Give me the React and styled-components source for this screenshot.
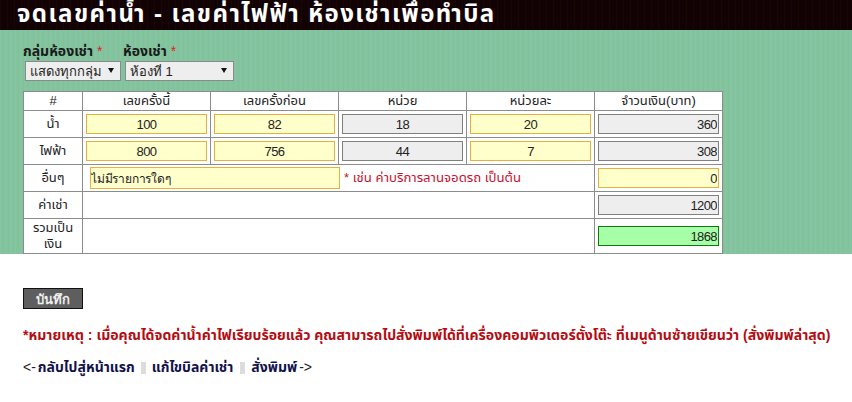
import React from "react";
import styled, { createGlobalStyle } from "styled-components";

const Global = createGlobalStyle`
  html, body { margin: 0; padding: 0; background: #fff; }
  body { font-family: "Liberation Sans", Arial, "Noto Sans Thai", "Noto Sans", "DejaVu Sans", sans-serif; color: #111; overflow: hidden; }
`;
const Page = styled.div`width: 852px; height: 402px; display: flex; flex-direction: column;`;
const Header = styled.header`
  height: 30px; flex: none; box-sizing: border-box; padding-left: 17px;
  background: #120204;
  background-image: repeating-linear-gradient(90deg, rgba(255,255,255,.02) 0 1px, transparent 1px 7px);
`;
const Title = styled.h1`margin: 0; font-size: 24px; line-height: 27px; letter-spacing: 1.45px; font-weight: 700; color: #fff; white-space: nowrap;`;
const GreenPanel = styled.section`
  height: 224px; flex: none; box-sizing: border-box; padding: 12px 0 0 23px;
  background-color: #83c49f;
  background-image:
    repeating-linear-gradient(90deg, rgba(255,255,255,.03) 0 1px, transparent 1px 3px, rgba(0,60,30,.02) 3px 4px, transparent 4px 5px);
`;
const Filters = styled.div`display: flex; gap: 2px; height: 49px;`;
const Field = styled.div`display: flex; flex-direction: column;`;
const FieldLabel = styled.label`font-size: 14px; font-weight: 700; line-height: 18px; height: 19px; color: #1a1a1a; white-space: nowrap;`;
const Star = styled.span`color: #e02020; font-weight: 400;`;
const SelectWrap = styled.div`position: relative; margin-left: ${p => p.$offset}px; width: ${p => p.$w}px; height: 20px;`;
const Select = styled.select`
  appearance: none; width: 100%; height: 100%; box-sizing: border-box; margin: 0;
  border: 1px solid #8a8a8a; border-radius: 0; background: #eeeeee; color: #222;
  font: 13px "Liberation Sans", Arial, sans-serif; padding: 0 0 0 4px;
`;
const Caret = styled.svg`position: absolute; right: ${p => p.$r}px; top: 7px; width: 6px; height: 5px; pointer-events: none;`;
const Table = styled.table`
  border-collapse: collapse; table-layout: fixed; width: 699px; background: #fff; font-size: 13px; color: #222;
`;
const Th = styled.th`box-sizing: border-box; border: 1px solid #8c8c8c; font-weight: 400; padding: 0; height: 19px; width: ${p => p.$w}px; text-align: center; line-height: 16px;`;
const Td = styled.td`box-sizing: border-box; border: 1px solid #8c8c8c; padding: 0 ${p => p.$pad || 0}px; height: ${p => p.$h || 27}px; text-align: ${p => p.$align || "center"}; line-height: 16px;`;
const tones = {
  yellow: "background:#ffffcc;border-color:#e8b03c;",
  gray: "background:#eeeeee;border-color:#808080;",
  green: "background:#a6ffa6;border-color:#0e7a0e;",
};
const Num = styled.input`
  display: block; box-sizing: border-box; width: 121px; height: 20px; margin: 0 auto; padding: 0 1px;
  border: 1px solid; ${p => tones[p.$tone]}
  font: 13px "Liberation Sans", Arial, sans-serif; letter-spacing: -0.6px; color: #222; border-radius: 0; outline: none;
  text-align: ${p => p.$align || "center"};
`;
const OtherRow = styled.div`display: flex; align-items: center; gap: 4px; padding-left: 7px;`;
const OtherInput = styled.input`
  box-sizing: border-box; width: 250px; height: 22px; margin: 0; padding: 0;
  border: 1px solid #e8b03c; background: #ffffcc; border-radius: 0; outline: none;
  font: 12px "Liberation Sans", Arial, sans-serif; letter-spacing: -0.2px; color: #222;
`;
const Hint = styled.span`color: #c8102e; font-size: 13.2px; white-space: nowrap;`;
const Footer = styled.div`padding: 34px 0 0 23px; display: flex; flex-direction: column; align-items: flex-start;`;
const SaveButton = styled.button`
  width: 60px; height: 21px; box-sizing: border-box; border: 1px solid #111; background: #5e5e5e; color: #eee;
  font: 700 13px "Liberation Sans", Arial, sans-serif; padding: 0; border-radius: 0;
`;
const Note = styled.p`margin: 17px 0 0; font-size: 14.07px; line-height: 18px; font-weight: 700; color: #b40c12; white-space: nowrap;`;
const Links = styled.nav`margin-top: 14px; font-size: 14px; line-height: 18px; color: #222; display: flex; align-items: center; white-space: nowrap;`;
const A = styled.a`color: #12124a; font-weight: 700; text-decoration: none; margin: 0 ${p => p.$r || 0}px 0 ${p => p.$l || 0}px;`;
const Sep = styled.span`display: inline-block; width: 5px; height: 12px; background: #dcdcdc; margin: 2px ${p => p.$r}px 0 ${p => p.$l}px;`;

const Caretdown = ({ r }) => (
  <Caret $r={r} viewBox="0 0 6 5"><path d="M0 0h6L3 5z" fill="#111" /></Caret>
);
const n = () => {};
const Input = ({ v, tone = "yellow", align }) => <Num value={v} onChange={n} $tone={tone} $align={align} />;

export default function App() {
  return (
    <Page>
      <Global />
      <Header><Title>จดเลขค่าน้ำ - เลขค่าไฟฟ้า ห้องเช่าเพื่อทำบิล</Title></Header>
      <GreenPanel>
        <Filters>
          <Field>
            <FieldLabel>กลุ่มห้องเช่า <Star>*</Star></FieldLabel>
            <SelectWrap $offset={2} $w={96}>
              <Select defaultValue="a"><option value="a">แสดงทุกกลุ่ม</option></Select>
              <Caretdown r={7} />
            </SelectWrap>
          </Field>
          <Field>
            <FieldLabel>ห้องเช่า <Star>*</Star></FieldLabel>
            <SelectWrap $offset={2} $w={109}>
              <Select defaultValue="a"><option value="a">ห้องที่ 1</option></Select>
              <Caretdown r={7} />
            </SelectWrap>
          </Field>
        </Filters>
        <Table>
          <thead>
            <tr>
              <Th $w={59}>#</Th><Th $w={128}>เลขครั้งนี้</Th><Th $w={128}>เลขครั้งก่อน</Th>
              <Th $w={128}>หน่วย</Th><Th $w={128}>หน่วยละ</Th><Th $w={128}>จำวนเงิน(บาท)</Th>
            </tr>
          </thead>
          <tbody>
            <tr>
              <Td>น้ำ</Td><Td><Input v="100" /></Td><Td><Input v="82" /></Td>
              <Td><Input v="18" tone="gray" /></Td><Td><Input v="20" /></Td>
              <Td><Input v="360" tone="gray" align="right" /></Td>
            </tr>
            <tr>
              <Td>ไฟฟ้า</Td><Td><Input v="800" /></Td><Td><Input v="756" /></Td>
              <Td><Input v="44" tone="gray" /></Td><Td><Input v="7" /></Td>
              <Td><Input v="308" tone="gray" align="right" /></Td>
            </tr>
            <tr>
              <Td>อื่นๆ</Td>
              <Td colSpan={4} $align="left">
                <OtherRow>
                  <OtherInput value="ไม่มีรายการใดๆ" onChange={n} />
                  <Hint>* เช่น ค่าบริการลานจอดรถ เป็นต้น</Hint>
                </OtherRow>
              </Td>
              <Td><Input v="0" align="right" /></Td>
            </tr>
            <tr>
              <Td>ค่าเช่า</Td><Td colSpan={4} />
              <Td><Input v="1200" tone="gray" align="right" /></Td>
            </tr>
            <tr>
              <Td $h={35} $pad={6}>รวมเป็นเงิน</Td><Td colSpan={4} $h={35} />
              <Td $h={35}><Input v="1868" tone="green" align="right" /></Td>
            </tr>
          </tbody>
        </Table>
      </GreenPanel>
      <Footer>
        <SaveButton>บันทึก</SaveButton>
        <Note>*หมายเหตุ : เมื่อคุณได้จดค่าน้ำค่าไฟเรียบร้อยแล้ว คุณสามารถไปสั่งพิมพ์ได้ที่เครื่องคอมพิวเตอร์ตั้งโต๊ะ ที่เมนูด้านซ้ายเขียนว่า (สั่งพิมพ์ล่าสุด)</Note>
        <Links>
          &lt;-<A href="#" $l={2}>กลับไปสู่หน้าแรก</A>
          <Sep $l={6} $r={6} /><A href="#">แก้ไขบิลค่าเช่า</A>
          <Sep $l={7} $r={6} /><A href="#" $r={2}>สั่งพิมพ์</A>-&gt;
        </Links>
      </Footer>
    </Page>
  );
}
